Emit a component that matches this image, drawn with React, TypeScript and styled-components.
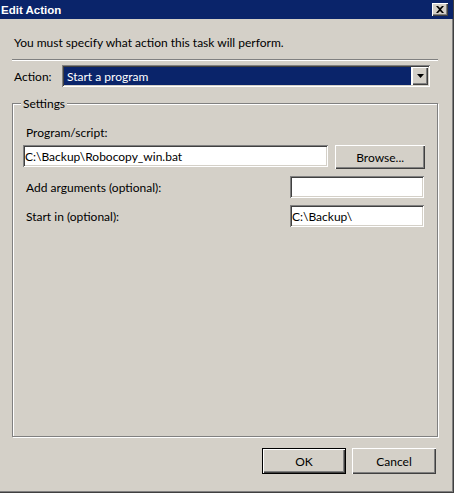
import React from "react";
import styled, { createGlobalStyle } from "styled-components";

const Global = createGlobalStyle`
  html, body { margin: 0; padding: 0; background: #d4d0c8; }
  * { box-sizing: border-box; }
`;

const FONT = `"Lato", "Noto Sans", sans-serif`;

const Window = styled.div`
  width: 454px;
  height: 493px;
  background: #d4d0c8;
  display: flex;
  flex-direction: column;
  box-shadow: inset -1px -1px 0 #404040, inset -2px -2px 0 #808080, inset -3px -3px 0 #d4d0c8;
  font-family: ${FONT};
  font-size: 12px;
  color: #000;
`;

const TitleBar = styled.div`
  height: 19px;
  margin-right: 1px;
  background: #0a246a;
  display: flex;
  align-items: center;
  justify-content: space-between;
  padding: 0 5px 0 1px;
`;

const Title = styled.span`
  color: #fff;
  font-family: "Liberation Sans", sans-serif;
  font-weight: bold;
  font-size: 11.5px;
`;

const CloseBtn = styled.div`
  width: 16px;
  height: 13px;
  background: #d4d0c8;
  box-shadow: inset 1px 1px 0 #fff, inset -1px -1px 0 #404040, inset -2px -2px 0 #808080;
  display: flex;
  align-items: center;
  justify-content: center;
`;

const Body = styled.div`
  flex: 1;
  display: flex;
  flex-direction: column;
  padding: 16px 16px 0 12px;
`;

const Intro = styled.div`
  padding-left: 2px;
  line-height: 15px;
  height: 15px;
`;

const Separator = styled.div`
  margin-top: 9px;
  width: 426px;
  height: 2px;
  border-top: 1px solid #808080;
  border-bottom: 1px solid #fff;
`;

const ActionRow = styled.div`
  margin-top: 4px;
  display: flex;
  align-items: center;
  height: 22px;
  padding-left: 2px;
`;

const ActionLabel = styled.span`
  width: 48px;
`;

const Combo = styled.div`
  width: 368px;
  height: 22px;
  background: #fff;
  box-shadow: inset 1px 1px 0 #808080, inset -1px -1px 0 #fff, inset 2px 2px 0 #404040, inset -2px -2px 0 #d4d0c8;
  padding: 2px;
  display: flex;
  gap: 1px;
`;

const Selected = styled.div`
  flex: 1;
  background: #0a246a;
  color: #fff;
  display: flex;
  align-items: center;
  padding-left: 3px;
`;

const DropBtn = styled.div`
  width: 16px;
  background: #d4d0c8;
  box-shadow: inset 1px 1px 0 #fff, inset -1px -1px 0 #404040, inset -2px -2px 0 #808080;
  display: flex;
  align-items: center;
  justify-content: center;
`;

const Group = styled.div`
  position: relative;
  margin-top: 16px;
  width: 426px;
  height: 334px;
  border: 1px solid #808080;
  box-shadow: 1px 1px 0 #fff, inset 1px 1px 0 #fff;
  padding: 21px 12px 0 10px;
  display: flex;
  flex-direction: column;
`;

const Legend = styled.span`
  position: absolute;
  top: -8px;
  left: 8px;
  padding: 0 2px;
  background: #d4d0c8;
  line-height: 15px;
`;

const FieldLabel = styled.div`
  padding-left: 3px;
  line-height: 15px;
  height: 15px;
`;

const ProgRow = styled.div`
  margin-top: 5px;
  display: flex;
  gap: 7px;
  align-items: flex-start;
`;

const Input = styled.div<{ $w: number }>`
  width: ${(p) => p.$w}px;
  height: 22px;
  background: #fff;
  box-shadow: inset 1px 1px 0 #808080, inset -1px -1px 0 #fff, inset 2px 2px 0 #404040, inset -2px -2px 0 #d4d0c8;
  display: flex;
  align-items: center;
  padding-left: 2px;
  white-space: nowrap;
`;

const Button = styled.div<{ $w: number; $h: number; $default?: boolean }>`
  width: ${(p) => p.$w}px;
  height: ${(p) => p.$h}px;
  background: #d4d0c8;
  display: flex;
  align-items: center;
  justify-content: center;
  box-shadow: ${(p) =>
    p.$default
      ? "inset 1px 1px 0 #000, inset -1px -1px 0 #000, inset 2px 2px 0 #fff, inset -2px -2px 0 #404040, inset -3px -3px 0 #808080"
      : "inset 1px 1px 0 #fff, inset -1px -1px 0 #404040, inset -2px -2px 0 #808080"};
`;

const OptRow = styled.div<{ $mt: number }>`
  margin-top: ${(p) => p.$mt}px;
  display: flex;
  align-items: center;
  justify-content: space-between;
  padding-right: 1px;
`;

const Footer = styled.div`
  margin-top: 11px;
  display: flex;
  justify-content: flex-end;
  gap: 6px;
  padding-right: 2px;
`;

export default function App() {
  return (
    <>
      <Global />
      <Window>
        <TitleBar>
          <Title>Edit Action</Title>
          <CloseBtn>
            <svg width="8" height="7" viewBox="0 0 8 7">
              <path d="M0 0 L2 0 L4 2 L6 0 L8 0 L5 3.5 L8 7 L6 7 L4 5 L2 7 L0 7 L3 3.5 Z" fill="#000" />
            </svg>
          </CloseBtn>
        </TitleBar>
        <Body>
          <Intro>You must specify what action this task will perform.</Intro>
          <Separator />
          <ActionRow>
            <ActionLabel>Action:</ActionLabel>
            <Combo>
              <Selected>Start a program</Selected>
              <DropBtn>
                <svg width="7" height="4" viewBox="0 0 7 4">
                  <path d="M0 0 H7 L3.5 4 Z" fill="#000" />
                </svg>
              </DropBtn>
            </Combo>
          </ActionRow>
          <Group>
            <Legend>Settings</Legend>
            <FieldLabel>Program/script:</FieldLabel>
            <ProgRow>
              <Input $w={306}>C:\Backup\Robocopy_win.bat</Input>
              <Button $w={90} $h={24}>Browse...</Button>
            </ProgRow>
            <OptRow $mt={7}>
              <FieldLabel>Add arguments (optional):</FieldLabel>
              <Input $w={134} />
            </OptRow>
            <OptRow $mt={7}>
              <FieldLabel>Start in (optional):</FieldLabel>
              <Input $w={134}>C:\Backup\</Input>
            </OptRow>
          </Group>
          <Footer>
            <Button $w={84} $h={26} $default>OK</Button>
            <Button $w={84} $h={26}>Cancel</Button>
          </Footer>
        </Body>
      </Window>
    </>
  );
}
